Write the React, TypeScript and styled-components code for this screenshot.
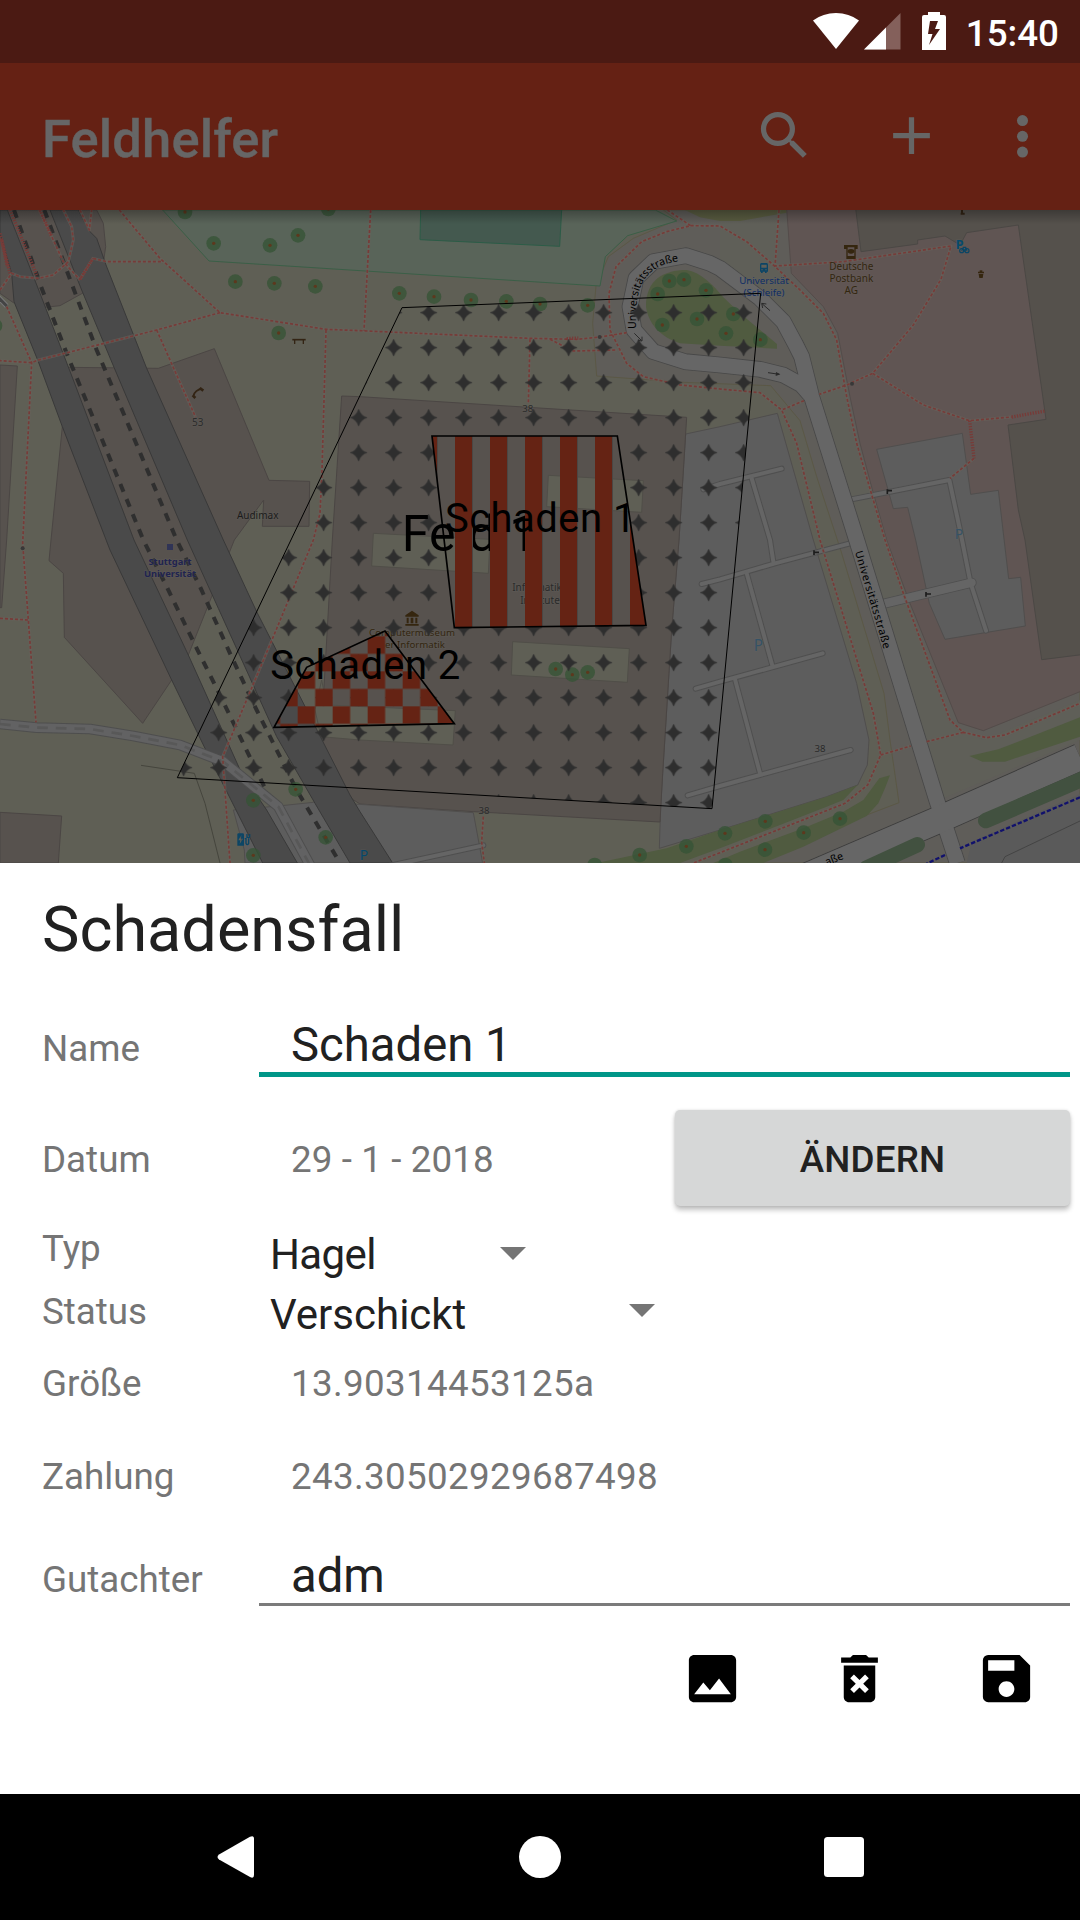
import React from "react";
import styled, { createGlobalStyle } from "styled-components";

const GlobalStyle = createGlobalStyle`
  *, *::before, *::after { box-sizing: border-box; }
  html, body { margin: 0; padding: 0; background: #000; }
  body { font-family: Roboto, "Noto Sans", sans-serif; }
`;

const Screen = styled.div`
  width: 1080px;
  height: 1920px;
  display: flex;
  flex-direction: column;
  overflow: hidden;
`;

const StatusBar = styled.header`
  height: 63px;
  flex: none;
  display: flex;
  align-items: flex-start;
  justify-content: flex-end;
  padding: 12px 21px 0 0;
  background: #4b1a13;
  color: #fff;

  svg { display: block; flex: none; }
`;

const WifiIcon = styled.svg`
  margin-right: 5px;
`;

const SignalIcon = styled.svg`
  margin-right: 21px;
`;

const Clock = styled.span`
  margin-left: 20px;
  font-size: 36.75px;
  line-height: 43px;
  font-weight: 500;
`;

const AppBar = styled.div`
  height: 147px;
  flex: none;
  display: flex;
  align-items: center;
  padding: 0 26px 2px 42px;
  background: #652114;
  color: #666;
`;

const AppTitle = styled.h1`
  flex: 1;
  margin: 0;
  padding-top: 6px;
  font-size: 52.5px;
  line-height: 62px;
  font-weight: 500;
  letter-spacing: 0.15px;
  -webkit-text-stroke: 0.4px #666;
`;

const IconButton = styled.button<{ $gap?: number }>`
  display: block;
  width: 63px;
  height: 63px;
  margin: 0 0 0 ${(p) => p.$gap ?? 0}px;
  padding: 0;
  border: 0;
  background: none;
  color: inherit;

  svg { display: block; width: 63px; height: 63px; fill: currentColor; }
`;

const MapArea = styled.div`
  height: 653px;
  flex: none;
  background: #5f5f55;

  svg { display: block; }
`;

const Sheet = styled.section`
  height: 931px;
  flex: none;
  display: flex;
  flex-direction: column;
  padding: 0 10px 0 42px;
  background: #fff;
  color: #212121;
`;

const SheetTitle = styled.h2`
  margin: 0;
  font-size: 63px;
  line-height: 133px;
  font-weight: 400;
`;

const Row = styled.div<{ $h: number; $top?: number; $align?: string }>`
  display: flex;
  flex: none;
  height: ${(p) => p.$h}px;
  margin-top: ${(p) => p.$top ?? 0}px;
  align-items: ${(p) => p.$align ?? "center"};
`;

const Label = styled.span<{ $lift?: number; $drop?: number }>`
  width: 217px;
  flex: none;
  padding-top: ${(p) => p.$drop ?? 0}px;
  padding-bottom: ${(p) => p.$lift ?? 0}px;
  font-size: 36.75px;
  line-height: 44px;
  color: #757575;
`;

const Value = styled.span<{ $spacing?: number; $drop?: number }>`
  flex: 1;
  padding-top: ${(p) => p.$drop ?? 0}px;
  padding-left: 32px;
  font-size: 36.75px;
  line-height: 44px;
  letter-spacing: ${(p) => p.$spacing ?? 0}px;
  color: #757575;
`;

const Field = styled.div<{ $active?: boolean }>`
  flex: 1;
  padding-left: 32px;
  font-size: 47.25px;
  line-height: 54px;
  border-bottom: ${(p) => (p.$active ? "5px solid #009688" : "3px solid #7b7b7b")};
`;

const ChangeButton = styled.button`
  width: 395px;
  height: 96px;
  padding: 4px 0 0;
  border: 0;
  border-radius: 5px;
  background: #d6d7d7;
  box-shadow: 0 4px 5px rgba(0, 0, 0, 0.24), 0 0 3px rgba(0, 0, 0, 0.12);
  font: 500 36.75px/44px Roboto, sans-serif;
  letter-spacing: 0.15px;
  color: #212121;
`;

const Spinner = styled.div<{ $w: number; $spacing?: number }>`
  display: flex;
  align-items: center;
  justify-content: space-between;
  width: ${(p) => p.$w}px;
  padding: 2px 0 0 11px;
  font-size: 42px;
  line-height: 50px;
  letter-spacing: ${(p) => p.$spacing ?? 0}px;
`;

const Caret = styled.i<{ $lift: number }>`
  margin-bottom: ${(p) => p.$lift}px;
  border: 13px solid transparent;
  border-top-color: #757575;
  border-bottom: 0;
`;

const Actions = styled.div`
  display: flex;
  justify-content: flex-end;
  margin-top: 41px;
  padding-right: 32px;
  color: #000;
`;

const NavBar = styled.nav`
  flex: 1;
  display: flex;
  justify-content: space-between;
  align-items: center;
  padding: 0 216px 0 217px;
  background: #000;

  svg { display: block; fill: #fff; }
`;

/* Map geometry: three units per screen pixel. */
const BUILDINGS = [
  "M0 0L290 0L310 40L317 110L300 230L247 250L180 287L135 292L40 278L0 250Z",
  "M1025 558L1080 560L2060 622L2037 990L2015 1260L1988 1690L1980 1836L1420 1805L1080 1782L950 1700L963 1590L997 990Z",
  "M0 465L52 468L20 990L5 1193L0 1193Z",
  "M205 472L475 475L643 416L807 811L929 814L927 949L787 949L791 870L703 990L565 1335L515 1410L428 1540L193 1282L190 1090L147 1052L153 990L187 650Z",
  "M0 1807L185 1818L175 1959L0 1959Z",
];
const COURTYARDS = [
  "M1645 796L1930 812L1925 907L1640 890Z",
  "M1120 970L1470 988L1465 1090L1115 1068Z",
  "M1538 1295L1888 1316L1882 1417L1534 1395Z",
  "M965 1410L980 1485L1366 1502L1359 1605L1080 1590L963 1580L945 1500Z",
];
const RAILS = [
  "M0 0L22 0L120 250L220 510L402 990L565 1335L725 1690L800 1800L892 1959L788 1959L615 1615L515 1410L330 1020L187 650L115 455L42 275L35 190L0 70Z",
  "M150 0L245 240L342 472L562 990L655 1195L830 1580L945 1780L1050 1959L1178 1959L1080 1805L1050 1755L890 1440L770 1205L670 990L440 475L318 165L290 85L265 60L235 0Z",
];
const TRACKS = [
  "M42 0L125 235L200 430L430 990L500 1130L590 1315L650 1435L795 1735",
  "M133 0L207 200L290 420L400 680L530 990L600 1130L690 1330L760 1480L890 1740L1020 1959",
];
const PATHS = [
  "M358 0L480 145L660 308L978 358L1080 362L1590 385L1730 388L1800 381L1880 368",
  "M240 208L279 145L320 155L487 155",
  "M660 308L470 360L115 450L95 458L0 452",
  "M20 290L95 458L68 1000L85 1230L108 1537",
  "M0 1225L85 1230",
  "M470 360L530 495L587 622",
  "M978 360L966 780L960 910L940 990L820 1280L668 1640L690 1959",
  "M1112 0L1092 362",
  "M1590 388L1585 580",
  "M1650 388L1720 423L1850 420",
  "M2002 0L2072 47L2000 65L1925 95L1848 170L1827 250L1830 360L1880 460L1930 500L2040 525L2160 537L2280 548L2345 600L2390 700L2460 990L2620 1510L2642 1635L2603 1725L2535 1780L2160 1928L2080 1959",
  "M2072 47L2160 48L2240 95L2320 165L2400 240L2470 310L2510 390L2540 560L2570 700L2655 990L2710 1150L2850 1530L2890 1567L2960 1583L3015 1575L3240 1480",
  "M2337 0L2325 168L2530 155L2853 108L2823 208L2740 345L2618 490L2540 525L2458 553",
  "M2618 490L2770 585L2908 632L3035 621",
  "M2922 745L2850 805",
  "M2412 572L2345 600",
  "M2642 1635L2732 1608M2780 1595L2890 1567",
  "M1450 1820L1445 1895L1453 1959",
  "M0 240L35 190L60 200L115 205L160 195L205 155L220 90L215 50L190 0",
  "M118 0L190 155L240 210",
  "M240 0L268 60L275 0",
];
const STEPS = ["M0 70L30 190M5 90L22 170", "M30 0L110 195", "M120 0L155 80", "M240 208L279 145", "M3035 621L3135 603", "M2909 632L2922 745", "M1700 386L1735 384"];
const AISLES = [
  "M2110 838L2160 822L2345 776",
  "M2255 805L2310 990L2320 1055",
  "M2105 1122L2160 1108L2325 1060L2550 1000",
  "M2240 1090L2318 1370",
  "M2087 1436L2160 1415L2468 1330",
  "M2205 1408L2280 1690",
  "M2063 1756L2160 1728L2552 1620",
  "M2555 868L2848 810L2880 960L2912 1120L2958 1262",
  "M1170 1967L1450 1906",
];
const LOOP = "M2872 1959L2810 1770L2570 990L2435 560L2405 440L2385 400L2350 335L2280 265L2160 175L2130 160L2058 137L1960 155L1908 205L1890 290L1902 360L1960 425L2055 455L2160 465L2280 478L2350 495L2405 525L2435 560";
const MAIN_ROAD = "M2360 2025L2810 1832L3240 1641";
const LANE = "M0 1542L110 1553L270 1557L400 1578L540 1605L670 1655L835 1790L935 1975";

const TREES: [number, number][] = [
  [555, 6], [985, -3], [641, 100], [810, 106], [894, 76], [706, 215], [823, 220], [946, 229], [836, 369], [-15, 347],
  [1198, 250], [1302, 260], [1413, 270], [1519, 274], [1620, 282], [1763, 286], [1973, 252], [2008, 213], [2052, 209],
  [2118, 241], [1987, 345], [2091, 327], [2178, 370], [2200, 312], [2281, 389],
  [887, 1738], [760, 1771], [977, 1882], [760, 1936], [1667, 1377], [1717, 1394], [1763, 1387], [1919, 1935],
  [2059, 1909], [1784, 1965], [2175, 1870], [2296, 1834], [2520, 1826], [2411, 1868], [2295, 1919], [2176, 1965],
];

const MapText = styled.text<{ $size?: number; $weight?: number }>`
  font-family: "Noto Sans", sans-serif;
  font-size: ${(p) => p.$size ?? 29}px;
  font-weight: ${(p) => p.$weight ?? 400};
  text-anchor: middle;
  paint-order: stroke;
  stroke: rgba(104, 104, 100, 0.25);
  stroke-width: 4px;
`;

const StreetText = styled.text`
  font-family: "Noto Sans", sans-serif;
  font-size: 32px;
  fill: #000;
`;

const ShapeLabel = styled.text<{ $size: number; $spacing: number }>`
  font-family: Roboto, sans-serif;
  font-size: ${(p) => p.$size}px;
  letter-spacing: ${(p) => p.$spacing}px;
  fill: #000;
`;

const FieldMap = () => (
  <svg width="1080" height="653" viewBox="0 0 3240 1959">
    <defs>
      <pattern id="stars" patternUnits="userSpaceOnUse" x="1128.5" y="255.5" width="105" height="105">
        <path d="M27 52.5Q45 48 52.5 27Q60 48 78 52.5Q60 57 52.5 78Q45 57 27 52.5Z" fill="#2e2e2e" stroke="#2e2e2e" strokeWidth="1.5" />
      </pattern>
      <pattern id="stripes" patternUnits="userSpaceOnUse" x="1365" y="0" width="105" height="105">
        <rect width="51" height="105" fill="#652314" />
        <rect x="51" width="3" height="105" fill="#4b4643" />
      </pattern>
      <pattern id="checks" patternUnits="userSpaceOnUse" x="893" y="1384" width="105" height="105">
        <path d="M0 0H52.5V52.5H0ZM52.5 52.5H105V105H52.5Z" fill="#652314" />
      </pattern>
      <linearGradient id="shade" x1="0" y1="0" x2="0" y2="1">
        <stop offset="0" stopColor="#000" stopOpacity="0.28" />
        <stop offset="1" stopColor="#000" stopOpacity="0" />
      </linearGradient>
      <path id="streetArc" d="M1909 357L1909 300Q1912 190 1995 163Q2030 152 2070 151" />
    </defs>

    <rect width="3240" height="1959" fill="#5f5f55" />
    <path d="M2030 30L1900 85L1825 140L1788 228L1778 340L1790 498L2050 517L2312 527L2400 632L2450 800L2522 1020L2652 1450L2670 1590L2697 1778L2600 1815L2280 1959L3240 1959L3240 0L1990 0Z" fill="#5f5d59" stroke="#5b5846" strokeWidth="3" />
    <path d="M2337 0L2325 170L2440 270L2510 380L2570 700L2720 1160L2850 1540L2950 1590L3240 1470V1590L2830 1765L2600 1040L2450 560L2390 400L2280 250L2160 150V0Z" fill="#5f5f58" />
    <path d="M2055 0H2360V8L2220 33H2160L2100 22Z" fill="#585b40" />
    <path d="M488 0L627 153L1080 182L1800 228L1816 140L1883 77L2030 33L1966 0Z" fill="#596459" stroke="#3b5f47" strokeWidth="3" />
    <path d="M1262 0L1260 89L1679 109L1685 0Z" fill="#44594f" stroke="#2c5c47" strokeWidth="3" />

    <path d="M2360 -5L2374 190L2470 290L2513 370L2550 560L2580 700L2620 850L2660 990L2730 1180L2875 1538L2950 1562L3245 1443V-5Z" fill="#605553" stroke="#544c4a" strokeWidth="3" />
    <path d="M2567 -5L2583 125L2753 102V90L2835 78L2880 105L2900 68L3055 45L3138 628L3024 645L3055 900L3075 990L3125 1349L3245 1334V-5Z" fill="#55514c" stroke="#4b4845" strokeWidth="3" />
    <path d="M2630 718L2887 670L2912 853L2995 841L3026 1106L3062 1102L3076 1248L2835 1288L2788 1180L2747 990L2723 892L2680 896Z" fill="#5d5d5d" stroke="#504e4d" strokeWidth="3" />
    <path d="M2057 672L2160 650L2332 610L2440 990L2570 1420L2607 1590L2602 1665L2573 1725L2480 1760L2160 1860L1978 1915L1982 1790L2015 1260L2037 990Z" fill="#5d5d5d" stroke="#504e4d" strokeWidth="3" />

    <g fill="#57524e" stroke="#4b4644" strokeWidth="3">
      {BUILDINGS.map((d) => <path key={d} d={d} />)}
    </g>
    <g fill="#5f5f55" stroke="#504e48" strokeWidth="3">
      {COURTYARDS.map((d) => <path key={d} d={d} />)}
    </g>
    <path d="M735 1959L733 1920L700 1800L845 1787L940 1777L1080 1783L1420 1808L1448 1959Z" fill="#5d5d5d" stroke="#504e4d" strokeWidth="3" />

    <g fill="#505b40">
      <path d="M1938 290C1938 210 1990 180 2060 180C2100 185 2140 225 2170 262L2220 310L2331 402V416L2160 407L2040 400C1980 380 1945 340 1938 290Z" />
      <path d="M2573 1725L2480 1760L2160 1860L2000 1915L1790 1959H2040L2160 1915L2480 1790L2530 1770Z" />
      <path d="M2670 1696L2638 1705L2590 1770L2530 1805L2410 1855L2220 1925L2140 1959H2290L2410 1910L2600 1818L2635 1780L2655 1735Z" />
      <path d="M2908 1638L2995 1618L3240 1522V1580L3015 1655H2947Z" />
    </g>
    <path d="M2915 1895L3240 1752V1959H2900Z" fill="#5a5a5a" />
    <path d="M3240 1833L3015 1940L3005 1959" fill="none" stroke="#444" strokeWidth="3" />

    <g fill="#4a4a4a" stroke="#393939" strokeWidth="3">
      {RAILS.map((d) => <path key={d} d={d} />)}
    </g>
    <g fill="none" stroke="#2f2f2f" strokeWidth="12" strokeDasharray="25 24">
      {TRACKS.map((d) => <path key={d} d={d} />)}
    </g>
    <path d="M423 1666L583 1690L615 1780L660 1959" fill="none" stroke="#45453d" strokeWidth="3" />

    <g fill="none" strokeLinejoin="round">
      <path d={LANE} stroke="#4e4e4e" strokeWidth="32" />
      <path d={LANE} stroke="#626263" strokeWidth="26" />
      <path d={LANE} stroke="#585858" strokeWidth="8" strokeDasharray="32 24" />
      <g strokeLinecap="round">
        <g stroke="#4f4f4f" strokeWidth="18">{AISLES.map((d) => <path key={d} d={d} />)}</g>
        <path d="M2640 1184L2915 1118" stroke="#4f4f4f" strokeWidth="30" />
        <g stroke="#656565" strokeWidth="12">{AISLES.map((d) => <path key={d} d={d} />)}</g>
        <path d="M2640 1184L2915 1118" stroke="#656565" strokeWidth="25" />
      </g>
      <path d={LOOP} stroke="#484848" strokeWidth="50" />
      <path d={MAIN_ROAD} stroke="#3c3c3c" strokeWidth="84" />
      <path d={LOOP} stroke="#666" strokeWidth="45" />
      <path d={MAIN_ROAD} stroke="#666" strokeWidth="79" />
      <path d="M2957 1832L3260 1702" stroke="#425140" strokeWidth="46" strokeLinecap="round" />
      <path d="M2752 1904L2600 1974" stroke="#425140" strokeWidth="46" strokeLinecap="round" />
      <path d="M3240 1762L2880 1915M2835 1935L2780 1961" stroke="#11116c" strokeWidth="7" strokeDasharray="13 6" />
      <g stroke="#69625c" strokeOpacity="0.6" strokeWidth="9">{PATHS.map((d) => <path key={d} d={d} />)}</g>
      <g stroke="#773b38" strokeWidth="5" strokeDasharray="9 6">{PATHS.map((d) => <path key={d} d={d} />)}</g>
      <g stroke="#773b38" strokeWidth="10" strokeDasharray="4 4">{STEPS.map((d) => <path key={d} d={d} />)}</g>
      <path d="M-5 262L20 288" stroke="#777" strokeWidth="15" />
      <path d="M-5 262L20 288" stroke="#444" strokeWidth="9" />
    </g>

    {TREES.map(([x, y]) => (
      <g key={`${x},${y}`}>
        <circle cx={x} cy={y} r="22" fill="#365336" fillOpacity="0.78" />
        <circle cx={x} cy={y} r="5" fill="#5d381d" />
      </g>
    ))}
    <g fill="#383838">
      <circle cx="1799" cy="381" r="6" />
      <circle cx="2556" cy="521" r="6" />
      <circle cx="68" cy="1015" r="6" />
    </g>

    <g fill="none" stroke="#2a2a2a" strokeWidth="3">
      <path d="M1903 370L1925 392M1914 391L1926 393L1926 380" />
      <path d="M2310 302L2286 281M2288 294L2285 280L2299 282" />
      <path d="M2304 488L2338 493" />
    </g>
    <path d="M2328 486L2341 493L2327 498Z" fill="#2a2a2a" />
    <g fill="none" stroke="#1c1c1c" strokeWidth="5">
      <path d="M2662 852V838M2660 842H2676" />
      <path d="M2442 1035V1021M2441 1027H2457" />
      <path d="M2778 1160V1146M2776 1152H2793" />
    </g>

    <g stroke="#332414" fill="none">
      <path d="M877 389H917" strokeWidth="5" />
      <path d="M884 390V402M910 390V402" strokeWidth="4" />
      <path d="M580 558Q585 540 606 536" strokeWidth="5" />
      <path d="M578 556L586 564M599 534L610 542" strokeWidth="8" />
      <path d="M2886 -10V10M2882 11H2894" strokeWidth="6" />
    </g>
    <g fill="#35260f">
      <path d="M1216 1216L1236 1202L1256 1216V1220H1216ZM1220 1223H1226V1240H1220ZM1232 1223H1240V1240H1232ZM1246 1223H1252V1240H1246ZM1216 1242H1256V1247H1216Z" />
      <path d="M2532 105H2573V117H2567V147H2539V117H2532ZM2543 112V138H2563V112Z" fillRule="evenodd" />
      <ellipse cx="2553" cy="124" rx="10" ry="7" />
      <path d="M2934 185H2952V190H2934ZM2936 192H2950L2948 204H2938Z" />
      <path d="M2939 181H2947V186H2939Z" />
    </g>
    <g fill="#0c4565">
      <path d="M2284 159H2300Q2304 159 2304 164V185H2300V189H2295V185H2288V189H2283V185H2280V164Q2280 159 2284 159ZM2284 164V173H2300V164ZM2284 178V181H2288V178ZM2296 178V181H2300V178Z" fillRule="evenodd" />
      <path d="M712 1873Q712 1870 716 1870H728Q732 1870 732 1874V1907H712ZM724 1875L715 1891H721L719 1902L729 1886H723Z" fillRule="evenodd" />
      <path d="M734 1886H738V1900Q742 1908 746 1900V1885M741 1872V1882M749 1872V1882M739 1882H750" fill="none" stroke="#0c4565" strokeWidth="4" />
    </g>
    <g fill="none" stroke="#0a4665" strokeWidth="3.5">
      <circle cx="2885" cy="122" r="6" />
      <circle cx="2901" cy="122" r="6" />
      <path d="M2885 122L2890 112H2897L2901 122M2889 115L2894 123L2898 115" />
    </g>
    <rect x="501" y="1002" width="18" height="18" fill="#303456" />

    <MapText x="593" y="648" $size={30} fill="#2c2c2c">53</MapText>
    <MapText x="773" y="926" $size={30} fill="#1c1c1c">Audimax</MapText>
    <MapText x="510" y="1065" $size={28} $weight={700} fill="#1f2350">Stuttgart</MapText>
    <MapText x="510" y="1102" $size={28} $weight={700} fill="#1f2350">Universität</MapText>
    <MapText x="1583" y="605" $size={29} fill="#2a2a2a">38</MapText>
    <MapText x="1452" y="1813" $size={29} fill="#2a2a2a">38</MapText>
    <MapText x="2460" y="1627" $size={29} fill="#2a2a2a">38</MapText>
    <MapText x="1616" y="1143" $size={30} fill="#2a2a2a">Informatik-</MapText>
    <MapText x="1620" y="1182" $size={30} fill="#2a2a2a">Institute</MapText>
    <MapText x="1236" y="1277" fill="#33260f">Computermuseum</MapText>
    <MapText x="1236" y="1313" fill="#33260f">der Informatik</MapText>
    <MapText x="2554" y="179" $size={30} fill="#33260f">Deutsche</MapText>
    <MapText x="2554" y="215" $size={30} fill="#33260f">Postbank</MapText>
    <MapText x="2554" y="252" $size={30} fill="#33260f">AG</MapText>
    <MapText x="2292" y="223" $size={29} fill="#0e2d66">Universität</MapText>
    <MapText x="2292" y="259" $size={29} fill="#0e2d66">(Schleife)</MapText>
    <MapText x="2879" y="116" $size={38} $weight={700} fill="#064a6c">P</MapText>
    <MapText x="2877" y="988" $size={42} fill="#355266">P</MapText>
    <MapText x="2275" y="1324" $size={46} fill="#355266">P</MapText>
    <MapText x="1092" y="1949" $size={42} fill="#05476b">P</MapText>

    <StreetText textLength="272"><textPath href="#streetArc">Universitätsstraße</textPath></StreetText>
    <StreetText transform="translate(2565 1026) rotate(73.5)" textLength="304">Universitätsstraße</StreetText>
    <StreetText transform="translate(2480 1967) rotate(-22)">aße</StreetText>

    <path d="M1206 293L2282 250L2136 1796L532 1703Z" fill="url(#stars)" stroke="#000" strokeWidth="3" />
    <ShapeLabel x="1205" y="1023" $size={150} $spacing={0.7}>Feld 1</ShapeLabel>
    <path d="M1296 678H1852L1938 1246L1363 1253Z" fill="url(#stripes)" stroke="#000" strokeWidth="5" />
    <path d="M822 1552L920 1372L1155 1263L1363 1541Z" fill="url(#checks)" stroke="#000" strokeWidth="5" />
    <ShapeLabel x="1335" y="965" $size={120} $spacing={1.4}>Schaden 1</ShapeLabel>
    <ShapeLabel x="811" y="1407" $size={120} $spacing={1.2}>Schaden 2</ShapeLabel>
    <rect width="3240" height="42" fill="url(#shade)" />
  </svg>
);

const App = () => (
  <>
    <GlobalStyle />
    <Screen>
      <StatusBar>
        <WifiIcon width="46" height="38" viewBox="0 0 46 38">
          <path d="M0 8.5Q10 1 23 1Q36 1 46 8.5L23 37Z" fill="#fff" />
        </WifiIcon>
        <SignalIcon width="37" height="38" viewBox="0 0 37 38">
          <path d="M36.5 1V37.5H0Z" fill="#84605b" />
          <path d="M22 15.5V37.5H0Z" fill="#fff" />
        </SignalIcon>
        <svg width="24" height="38" viewBox="0 0 24 38">
          <path d="M6 0H18V3H22Q24 3 24 5V38H0V5Q0 3 2 3H6ZM8 9L6 22H10.500L7 33L18 17H13L16 9Z" fill="#fff" fillRule="evenodd" />
        </svg>
        <Clock>15:40</Clock>
      </StatusBar>
      <AppBar>
        <AppTitle>Feldhelfer</AppTitle>
        <IconButton aria-label="Suchen">
          <svg viewBox="0 0 24 24"><path d="M15.500 14h-.79l-.28-.27A6.471 6.471 0 0 0 16 9.500 6.500 6.500 0 1 0 9.500 16c1.610 0 3.090-.59 4.230-1.570l.27.28v.79l5 4.990L20.490 19l-4.990-5zm-6 0C7.010 14 5 11.990 5 9.500S7.010 5 9.500 5 14 7.010 14 9.500 11.990 14 9.500 14z" /></svg>
        </IconButton>
        <IconButton $gap={64} aria-label="Hinzufügen">
          <svg viewBox="0 0 24 24"><path d="M19 13h-6v6h-2v-6H5v-2h6V5h2v6h6z" /></svg>
        </IconButton>
        <IconButton $gap={48} aria-label="Mehr">
          <svg viewBox="0 0 24 24"><circle cx="12" cy="6.300" r="2.100" /><circle cx="12" cy="12.300" r="2.100" /><circle cx="12" cy="18.300" r="2.100" /></svg>
        </IconButton>
      </AppBar>
      <MapArea><FieldMap /></MapArea>
      <Sheet>
        <SheetTitle>Schadensfall</SheetTitle>
        <Row $h={59} $top={22} $align="baseline">
          <Label>Name</Label>
          <Field $active>Schaden 1</Field>
        </Row>
        <Row $h={96} $top={33}>
          <Label $drop={3}>Datum</Label>
          <Value $drop={3} $spacing={0.1}>29 - 1 - 2018</Value>
          <ChangeButton>ÄNDERN</ChangeButton>
        </Row>
        <Row $h={60} $top={18}>
          <Label $lift={11}>Typ</Label>
          <Spinner $w={267} $spacing={-0.6}>Hagel<Caret $lift={4} /></Spinner>
        </Row>
        <Row $h={60}>
          <Label $lift={5}>Status</Label>
          <Spinner $w={396}>Verschickt<Caret $lift={9} /></Spinner>
        </Row>
        <Row $h={79}>
          <Label>Größe</Label>
          <Value $spacing={0.34}>13.90314453125a</Value>
        </Row>
        <Row $h={107}>
          <Label>Zahlung</Label>
          <Value $spacing={0.34}>243.30502929687498</Value>
        </Row>
        <Row $h={57} $top={19} $align="baseline">
          <Label>Gutachter</Label>
          <Field>adm</Field>
        </Row>
        <Actions>
          <IconButton aria-label="Bild">
            <svg viewBox="0 0 24 24"><path d="M21 19V5c0-1.100-.9-2-2-2H5c-1.100 0-2 .9-2 2v14c0 1.100.9 2 2 2h14c1.100 0 2-.9 2-2zM8.500 13.500l2.500 3.010L14.500 12l4.500 6H5l3.500-4.500z" /></svg>
          </IconButton>
          <IconButton $gap={84} aria-label="Löschen">
            <svg viewBox="0 0 24 24"><path d="M6 19c0 1.100.9 2 2 2h8c1.100 0 2-.9 2-2V7H6v12zm2.460-7.120l1.410-1.410L12 12.590l2.120-2.120 1.410 1.410L13.410 14l2.120 2.120-1.410 1.410L12 15.410l-2.120 2.120-1.410-1.410L10.590 14l-2.130-2.120zM15.500 4l-1-1h-5l-1 1H5v2h14V4z" /></svg>
          </IconButton>
          <IconButton $gap={84} aria-label="Speichern">
            <svg viewBox="0 0 24 24"><path d="M17 3H5a2 2 0 0 0-2 2v14a2 2 0 0 0 2 2h14c1.100 0 2-.9 2-2V7l-4-4zm-5 16c-1.660 0-3-1.340-3-3s1.340-3 3-3 3 1.340 3 3-1.340 3-3 3zm3-10H5V5h10v4z" /></svg>
          </IconButton>
        </Actions>
      </Sheet>
      <NavBar>
        <svg width="38" height="42" viewBox="0 0 38 42"><path d="M33 .8Q37 -1.200 37 3V39Q37 43 33 41L2 23.500Q-1 21 2 18.500Z" /></svg>
        <svg width="42" height="42" viewBox="0 0 42 42"><circle cx="21" cy="21" r="21" /></svg>
        <svg width="40" height="40" viewBox="0 0 40 40"><rect width="40" height="40" rx="3.500" /></svg>
      </NavBar>
    </Screen>
  </>
);

export default App;
